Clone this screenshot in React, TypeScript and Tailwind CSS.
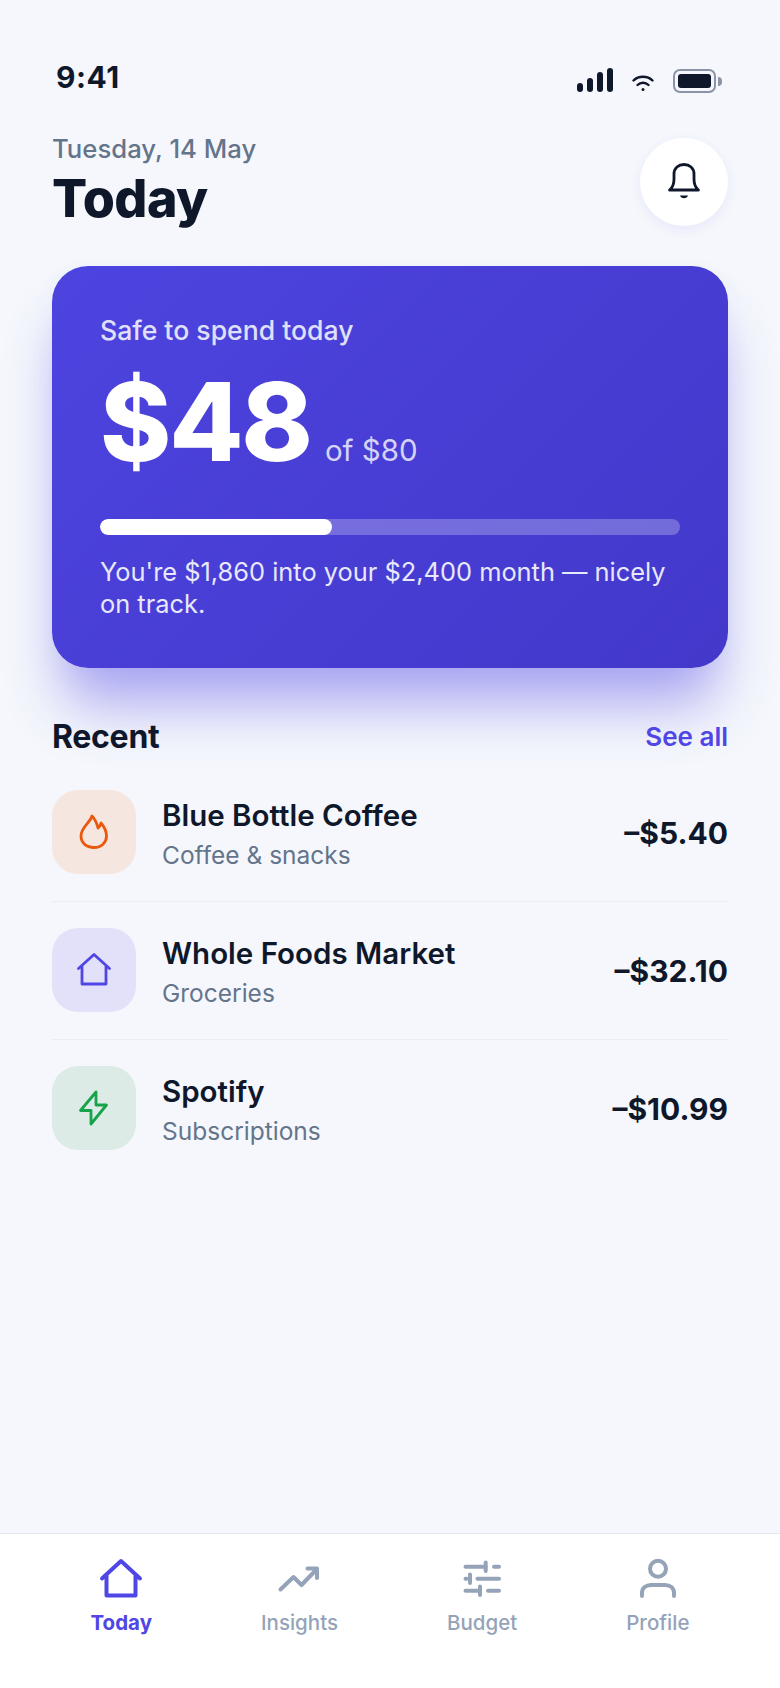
import React from 'react';

const transactions = [
  { name: 'Blue Bottle Coffee', sub: 'Coffee & snacks', amount: '–$5.40', bg: 'bg-[#f5e6e0]', icon: 'flame' },
  { name: 'Whole Foods Market', sub: 'Groceries', amount: '–$32.10', bg: 'bg-[#e2e1f9]', icon: 'house' },
  { name: 'Spotify', sub: 'Subscriptions', amount: '–$10.99', bg: 'bg-[#dcebe6]', icon: 'bolt' },
];

const RowIcon = ({ icon }: { icon: string }) => {
  if (icon === 'flame') {
    return (
      <svg width="36" height="36" viewBox="0 0 36 36" fill="none" stroke="#ea580c" strokeWidth="2.8" strokeLinejoin="round" strokeLinecap="round">
        <path d="M16 2C14 9 5 13 5 22C5 29 10.500 33.500 18 33.500C25.500 33.500 30.500 28.500 30.500 22C30.500 17 28 12.500 25 9C24.500 11 23.500 13 22 14C21 10 19 5 16 2Z" />
      </svg>
    );
  }
  if (icon === 'house') {
    return (
      <svg width="36" height="36" viewBox="0 0 36 36" fill="none" stroke="#4f46e5" strokeWidth="2.8" strokeLinejoin="round" strokeLinecap="round">
        <path d="M2.500 16.500L18 2.500L33.500 16.500M6 14V32H30V14" />
      </svg>
    );
  }
  return (
    <svg width="36" height="36" viewBox="0 0 36 36" fill="none" stroke="#16a34a" strokeWidth="2.8" strokeLinejoin="round" strokeLinecap="round">
      <path d="M20 2L4.500 20.500H15V34L30.500 15H20V2Z" />
    </svg>
  );
};

const NavIcon = ({ name }: { name: string }) => {
  const stroke = name === 'today' ? '#4f46e5' : '#94a3b8';
  return (
    <svg width="48" height="48" viewBox="0 0 48 48" fill="none" stroke={stroke} strokeWidth="4" strokeLinecap="round" strokeLinejoin="round">
      {name === 'today' && <path d="M5 21.500L24 4L43 21.500M9.500 18V38.500H38.500V18" />}
      {name === 'insights' && <path d="M5.500 32.500L18.500 20L26.500 28L42 12M32.500 11.500H42V21" />}
      {name === 'budget' && (
        <path d="M7.500 9.700H28M36 9.700H41M27.700 5.500V14M7.500 21.700H8.500M19.500 21.700H41M12 17.500V26M7.500 33.700H22M30 33.700H41M22 29.500V38" />
      )}
      {name === 'profile' && (
        <>
          <circle cx="24" cy="11.700" r="8" />
          <path d="M8 39V36C8 31 12 28 17 28H31C36 28 40 31 40 36V39" />
        </>
      )}
    </svg>
  );
};

const navItems = [
  { id: 'today', label: 'Today' },
  { id: 'insights', label: 'Insights' },
  { id: 'budget', label: 'Budget' },
  { id: 'profile', label: 'Profile' },
];

export default function App() {
  return (
    <div className="w-[780px] h-[1688px] bg-[#f5f7fc] flex flex-col overflow-hidden font-['Inter',sans-serif] text-[#0f172a]">
      <div className="flex-1 px-[52px]">
        {/* status bar */}
        <div className="flex items-start justify-between h-[128px] pt-[57px] pl-[4px] pr-[6px]">
          <span className="text-[30px] leading-[40px] font-bold tracking-[0.5px]">9:41</span>
          <div className="flex items-start gap-[19px] pt-[11px]">
            <div className="flex items-end gap-[4px] h-[24px]">
              <div className="w-[6px] h-[9px] rounded-[3px] bg-[#0f172a]" />
              <div className="w-[6px] h-[14px] rounded-[3px] bg-[#0f172a]" />
              <div className="w-[6px] h-[20px] rounded-[3px] bg-[#0f172a]" />
              <div className="w-[6px] h-[24px] rounded-[3px] bg-[#0f172a]" />
            </div>
            <svg width="22" height="18" viewBox="0 0 22 18" fill="none" stroke="#0f172a" strokeWidth="2.400" strokeLinecap="round" className="mt-[6px]">
              <path d="M1.500 6.500C6.500 1.500 15.500 1.500 20.500 6.500M5.500 11C8.500 8 13.500 8 16.500 11" />
              <circle cx="11" cy="15.500" r="1.500" fill="#0f172a" stroke="none" />
            </svg>
            <div className="flex items-center gap-[2px] mt-[1px]">
              <div className="w-[43px] h-[24px] rounded-[7px] border-2 border-[#8a94a6] p-[3px]">
                <div className="w-full h-full rounded-[3px] bg-[#0f172a]" />
              </div>
              <div className="w-[4px] h-[9px] rounded-r-full bg-[#8a94a6]" />
            </div>
          </div>
        </div>

        {/* header */}
        <div className="flex items-start justify-between">
          <div className="pt-[4px]">
            <p className="text-[25.700px] leading-[34px] font-medium text-[#64748b]">Tuesday, 14 May</p>
            <h1 className="text-[52px] leading-[62px] font-extrabold tracking-[-0.5px] mt-[2px]">Today</h1>
          </div>
          <button className="w-[88px] h-[88px] mt-[10px] rounded-full bg-white flex items-center justify-center shadow-[0_4px_12px_rgba(79,70,229,0.08)]">
            <svg width="36" height="40" viewBox="0 0 36 40" fill="none" stroke="#0f172a" strokeWidth="2.800" strokeLinecap="round" strokeLinejoin="round">
              <path d="M3.500 28C6.800 25.500 8 22 8 17V12C8 6 12.500 2.500 18 2.500C23.500 2.500 28 6 28 12V17C28 22 29.200 25.500 32.500 28Z" />
              <path d="M14 33.500H22C21 37 15 37 14 33.500Z" fill="#0f172a" stroke="none" />
            </svg>
          </button>
        </div>

        {/* hero card */}
        <div className="mt-[36px] h-[402px] rounded-[36px] bg-[linear-gradient(135deg,#4d44e0,#4338ca)] px-[48px] pt-[47px] text-white shadow-[0_48px_56px_-12px_rgba(79,70,229,0.45),0_8px_26px_rgba(79,70,229,0.05)]">
          <p className="text-[26.600px] leading-[34px] font-medium text-[#e0e0fa]">Safe to spend today</p>
          <div className="flex items-baseline gap-[14px] mt-[15px]">
            <span className="text-[108px] leading-[120px] font-extrabold tracking-[-0.02em]">$48</span>
            <span className="text-[29.500px] leading-[40px] text-[#d5d3f8]">of $80</span>
          </div>
          <div className="mt-[37px] h-[16px] rounded-full bg-white/25 overflow-hidden">
            <div className="h-full w-[40%] rounded-full bg-white" />
          </div>
          <p className="mt-[21px] text-[25.400px] leading-[32px] text-[#e8e8fc]">
            You're $1,860 into your $2,400 month — nicely on track.
          </p>
        </div>

        {/* recent */}
        <div className="flex items-center justify-between mt-[49px] h-[40px]">
          <h2 className="text-[32px] font-bold tracking-[-0.3px]">Recent</h2>
          <a className="text-[26px] font-semibold text-[#4f46e5] -mt-[2px]">See all</a>
        </div>
        <div className="mt-[7px]">
          {transactions.map((t, i) => (
            <div
              key={t.name}
              className={`flex items-center gap-[26px] pt-[26px] pb-[27px] ${i < 2 ? 'border-b border-[#eceef4]' : ''}`}
            >
              <div className={`w-[84px] h-[84px] rounded-[26px] flex items-center justify-center ${t.bg}`}>
                <RowIcon icon={t.icon} />
              </div>
              <div className="flex-1 pt-[4px]">
                <p className="text-[29.500px] leading-[38px] font-semibold">{t.name}</p>
                <p className="text-[24.500px] leading-[34px] text-[#64748b] mt-[4px]">{t.sub}</p>
              </div>
              <span className="text-[30px] font-bold pt-[2px]">{t.amount}</span>
            </div>
          ))}
        </div>
      </div>

      {/* bottom nav */}
      <nav className="h-[155px] bg-white border-t border-[#e4e6f0] flex items-start justify-around px-[36px] pt-[23px]">
        {navItems.map((item) => (
          <div key={item.id} className="flex flex-col items-center gap-[4px]">
            <NavIcon name={item.id} />
            <span className={`text-[20.500px] leading-[28px] ${item.id === 'today' ? 'font-bold text-[#4f46e5]' : 'font-medium text-[#94a3b8]'}`}>
              {item.label}
            </span>
          </div>
        ))}
      </nav>
    </div>
  );
}
